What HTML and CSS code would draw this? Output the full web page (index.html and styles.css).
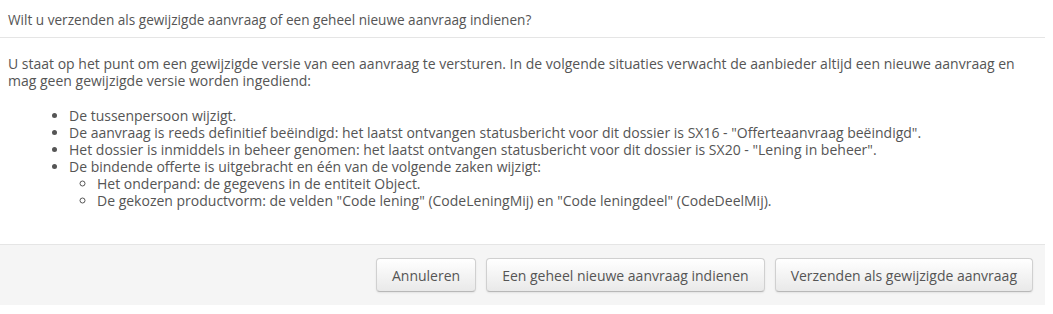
FILE: index.html
```html
<!DOCTYPE html>
<html lang="nl">
<head>
    <meta charset="UTF-8">
    <title>Aanvraag verzenden</title>
    <link rel="stylesheet" href="styles.css">
</head>
<body>
    <div class="modal">
        <div class="modal-header">Wilt u verzenden als gewijzigde aanvraag of een geheel nieuwe aanvraag indienen?</div>
        <div class="modal-body">
            <p>U staat op het punt om een gewijzigde versie van een aanvraag te versturen. In de volgende situaties verwacht de aanbieder altijd een nieuwe aanvraag en mag geen gewijzigde versie worden ingediend:</p>
            <ul>
                <li>De tussenpersoon wijzigt.</li>
                <li>De aanvraag is reeds definitief beëindigd: het laatst ontvangen statusbericht voor dit dossier is SX16 - "Offerteaanvraag beëindigd".</li>
                <li>Het dossier is inmiddels in beheer genomen: het laatst ontvangen statusbericht voor dit dossier is SX20 - "Lening in beheer".</li>
                <li>De bindende offerte is uitgebracht en één van de volgende zaken wijzigt:
                    <ul>
                        <li>Het onderpand: de gegevens in de entiteit Object.</li>
                        <li>De gekozen productvorm: de velden "Code lening" (CodeLeningMij) en "Code leningdeel" (CodeDeelMij).</li>
                    </ul>
                </li>
            </ul>
        </div>
        <div class="modal-footer">
            <button class="btn">Annuleren</button>
            <button class="btn">Een geheel nieuwe aanvraag indienen</button>
            <button class="btn">Verzenden als gewijzigde aanvraag</button>
        </div>
    </div>
</body>
</html>
```

FILE: styles.css
```css
body {
    margin: 0;
    background-color: #fff;
    font-family: 'Open Sans', 'Noto Sans', sans-serif;
    font-size: 14px;
    line-height: 17px;
    color: #555;
}
.modal {
    width: 1045px;
    background-color: #fff;
}
.modal-header {
    padding: 11px 8px 9px;
    font-size: 13.6px;
    border-bottom: 1px solid #e5e5e5;
}
.modal-body {
    padding: 17px 8px 35px;
}
.modal-body p {
    margin: 0 0 18px;
}
.modal-body ul {
    margin: 0;
    padding-left: 61px;
}
.modal-body ul ul {
    padding-left: 28px;
    list-style-type: circle;
}
.modal-footer {
    display: flex;
    justify-content: flex-end;
    gap: 10px;
    padding: 13px 12px 13px;
    background-color: #f5f5f5;
    border-top: 1px solid #e5e5e5;
}
.btn {
    height: 34px;
    padding: 0 15px;
    font-family: 'Open Sans', 'Noto Sans', sans-serif;
    font-size: 14px;
    color: #555;
    background-color: #f5f5f5;
    background-image: linear-gradient(to bottom, #fff, #e9e9e9);
    border: 1px solid #d0d0d0;
    border-bottom-color: #b8b8b8;
    border-radius: 4px;
    box-shadow: inset 0 1px 0 rgba(255, 255, 255, 0.2), 0 1px 2px rgba(0, 0, 0, 0.08);
    cursor: pointer;
}
```
